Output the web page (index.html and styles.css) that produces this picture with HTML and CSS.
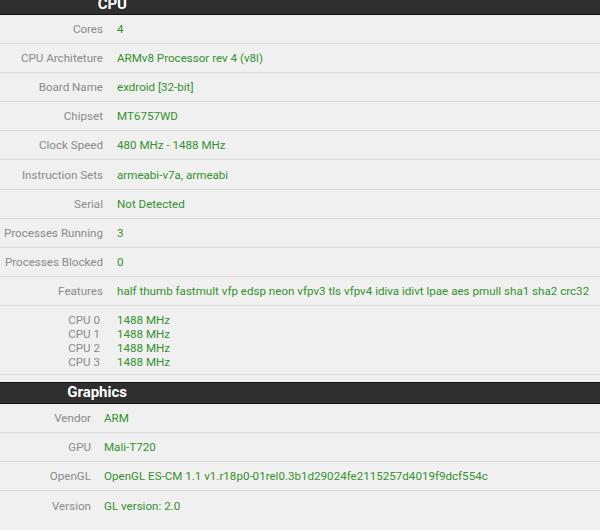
FILE: index.html
```html
<!DOCTYPE html>
<html lang="en">
<head>
    <meta charset="UTF-8">
    <title>Device Info</title>
    <link rel="stylesheet" href="styles.css">
</head>
<body>
    <section class="section section-cpu">
        <div class="section-header"><span class="section-title">CPU</span></div>
        <div class="row"><span class="label">Cores</span><span class="value">4</span></div>
        <div class="row"><span class="label">CPU Architeture</span><span class="value">ARMv8 Processor rev 4 (v8l)</span></div>
        <div class="row"><span class="label">Board Name</span><span class="value">exdroid [32-bit]</span></div>
        <div class="row"><span class="label">Chipset</span><span class="value">MT6757WD</span></div>
        <div class="row"><span class="label">Clock Speed</span><span class="value">480 MHz - 1488 MHz</span></div>
        <div class="row"><span class="label">Instruction Sets</span><span class="value">armeabi-v7a, armeabi</span></div>
        <div class="row"><span class="label">Serial</span><span class="value">Not Detected</span></div>
        <div class="row"><span class="label">Processes Running</span><span class="value">3</span></div>
        <div class="row"><span class="label">Processes Blocked</span><span class="value">0</span></div>
        <div class="row"><span class="label">Features</span><span class="value">half thumb fastmult vfp edsp neon vfpv3 tls vfpv4 idiva idivt lpae aes pmull sha1 sha2 crc32</span></div>
        <div class="core-list">
            <div class="core"><span class="label">CPU 0</span><span class="value">1488 MHz</span></div>
            <div class="core"><span class="label">CPU 1</span><span class="value">1488 MHz</span></div>
            <div class="core"><span class="label">CPU 2</span><span class="value">1488 MHz</span></div>
            <div class="core"><span class="label">CPU 3</span><span class="value">1488 MHz</span></div>
        </div>
    </section>

    <section class="section section-gpu">
        <div class="section-header"><span class="section-title">Graphics</span></div>
        <div class="row"><span class="label">Vendor</span><span class="value">ARM</span></div>
        <div class="row"><span class="label">GPU</span><span class="value">Mali-T720</span></div>
        <div class="row"><span class="label">OpenGL</span><span class="value">OpenGL ES-CM 1.1 v1.r18p0-01rel0.3b1d29024fe2115257d4019f9dcf554c</span></div>
        <div class="row last"><span class="label">Version</span><span class="value">GL version: 2.0</span></div>
    </section>
</body>
</html>
```

FILE: styles.css
```css
:root {
    --background: #f0f0f0;
    --header: #2f2f2f;
    --line: #dadada;
    --label: #8a8a8a;
    --value: #33922f;
}

* {
    margin: 0;
    padding: 0;
    box-sizing: border-box;
}

body {
    font-family: Roboto, 'Liberation Sans', sans-serif;
    font-size: 11.6px;
    background: var(--background);
    color: var(--label);
}

.section-cpu {
    margin-top: -7px;
    --label-width: 103px;
    --col-gap: 14px;
}

.section-gpu {
    margin-top: 7px;
    --label-width: 91px;
    --col-gap: 13px;
}

.section-header {
    background: var(--header);
    border-top: 1px solid #111;
    border-bottom: 1px solid #111;
    height: 22px;
    display: flex;
    align-items: center;
}

.section-title {
    width: 127px;
    text-align: right;
    color: #fff;
    font-weight: 700;
    font-size: 15px;
    line-height: 1;
}

.row {
    display: grid;
    grid-template-columns: var(--label-width) 1fr;
    column-gap: var(--col-gap);
    align-items: center;
    height: 29.1px;
    border-bottom: 1px solid var(--line);
    white-space: nowrap;
}

.row.last {
    border-bottom: none;
}

.label {
    text-align: right;
    color: var(--label);
}

.value {
    color: var(--value);
}

.core-list {
    padding: 7px 0 5px;
    border-bottom: 1px solid var(--line);
}

.core {
    display: grid;
    grid-template-columns: 100px 1fr;
    column-gap: 17px;
    line-height: 14px;
}
```
